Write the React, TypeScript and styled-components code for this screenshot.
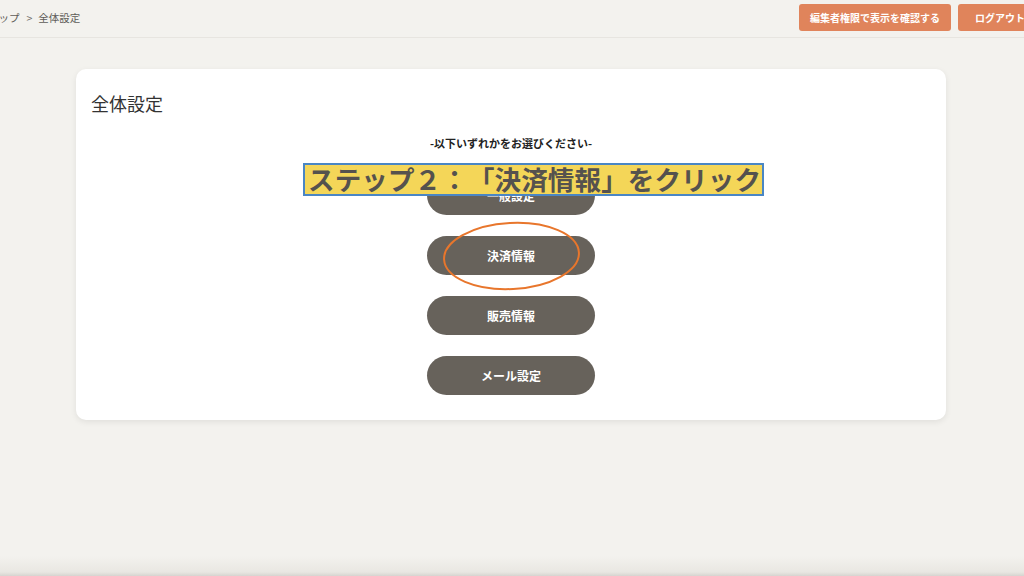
import React from "react";
import styled, { createGlobalStyle } from "styled-components";

const Global = createGlobalStyle`
  html, body { margin: 0; padding: 0; }
  body {
    font-family: "Noto Sans CJK JP", "Noto Sans", sans-serif;
    background: #f3f2ee;
    overflow: hidden;
  }
`;

const Page = styled.div`
  width: 1024px;
  height: 576px;
  overflow: hidden;
  display: flex;
  flex-direction: column;
  background: linear-gradient(
    to bottom,
    #f3f2ee 0,
    #f3f2ee 556px,
    #e9e7e2 572px,
    #d6d4d0 576px
  );
`;

const Header = styled.header`
  height: 38px;
  flex: none;
  box-sizing: border-box;
  border-bottom: 1px solid #e7e5e0;
  display: flex;
  align-items: center;
  justify-content: space-between;
`;

const Breadcrumb = styled.nav`
  margin-left: -12px;
  margin-top: -3px;
  display: flex;
  align-items: center;
  gap: 6px;
  font-size: 10.5px;
  color: #5f5d59;
  white-space: nowrap;
`;

const Sep = styled.span`
  color: #6b6965;
  margin-left: 1px;
`;

const HeaderActions = styled.div`
  display: flex;
  gap: 7px;
  margin-right: -18px;
  align-self: flex-start;
  margin-top: 4px;
`;

const HeaderButton = styled.button<{ $w: number }>`
  width: ${(p) => p.$w}px;
  height: 27px;
  border: none;
  border-radius: 3px;
  background: #e0845b;
  color: #fff;
  font-family: inherit;
  font-size: 10px;
  font-weight: 700;
  padding: 0;
  white-space: nowrap;
`;

const Main = styled.main`
  flex: 1;
  padding-top: 31px;
  display: flex;
  justify-content: center;
`;

const Card = styled.section`
  position: relative;
  width: 870px;
  height: 351px;
  box-sizing: border-box;
  margin-right: 2px;
  background: #fff;
  border-radius: 10px;
  box-shadow: 0 2px 6px rgba(0, 0, 0, 0.08);
  padding: 21px 15px 25px;
  display: flex;
  flex-direction: column;
`;

const Title = styled.h1`
  margin: 0;
  font-size: 18px;
  font-weight: 400;
  color: #333;
  line-height: 26px;
`;

const Lead = styled.p`
  margin: 19px 0 0;
  text-align: center;
  font-size: 11px;
  font-weight: 700;
  color: #222;
  line-height: 16px;
`;

const Choices = styled.div`
  margin-top: 25px;
  display: flex;
  flex-direction: column;
  align-items: center;
  gap: 21px;
`;

const Choice = styled.button`
  position: relative;
  width: 168px;
  height: 39px;
  border: none;
  border-radius: 20px;
  background: #67625b;
  color: #fff;
  font-family: inherit;
  font-size: 12px;
  font-weight: 700;
  padding: 0;
`;

const Circle = styled.svg`
  position: absolute;
  left: 16px;
  top: -15px;
  width: 137px;
  height: 70px;
  overflow: visible;
  pointer-events: none;
`;

const Banner = styled.div`
  position: absolute;
  left: 227px;
  top: 94px;
  width: 461px;
  height: 33px;
  box-sizing: border-box;
  border: 2px solid #4a86c4;
  background: #f4d658;
  color: #55524e;
  font-size: 26.5px;
  font-weight: 700;
  line-height: 27px;
  padding-left: 3px;
  letter-spacing: 0.15px;
  white-space: nowrap;
  overflow: hidden;
  text-spacing-trim: space-all;
  font-feature-settings: "palt" 0;
`;

const items = ["一般設定", "決済情報", "販売情報", "メール設定"];

export default function App() {
  return (
    <>
      <Global />
      <Page>
        <Header>
          <Breadcrumb>
            <span>トップ</span>
            <Sep>&gt;</Sep>
            <span>全体設定</span>
          </Breadcrumb>
          <HeaderActions>
            <HeaderButton $w={152}>編集者権限で表示を確認する</HeaderButton>
            <HeaderButton $w={84}>ログアウト</HeaderButton>
          </HeaderActions>
        </Header>
        <Main>
          <Card>
            <Title>全体設定</Title>
            <Lead>-以下いずれかをお選びください-</Lead>
            <Choices>
              {items.map((t) => (
                <Choice key={t}>
                  {t}
                  {t === "決済情報" && (
                    <Circle viewBox="0 0 137 70">
                      <ellipse
                        cx="68.5"
                        cy="35"
                        rx="67.5"
                        ry="33"
                        fill="none"
                        stroke="#e8762c"
                        strokeWidth="2"
                        transform="rotate(-3 68.5 35)"
                      />
                    </Circle>
                  )}
                </Choice>
              ))}
            </Choices>
            <Banner>ステップ２：「決済情報」をクリック</Banner>
          </Card>
        </Main>
      </Page>
    </>
  );
}
